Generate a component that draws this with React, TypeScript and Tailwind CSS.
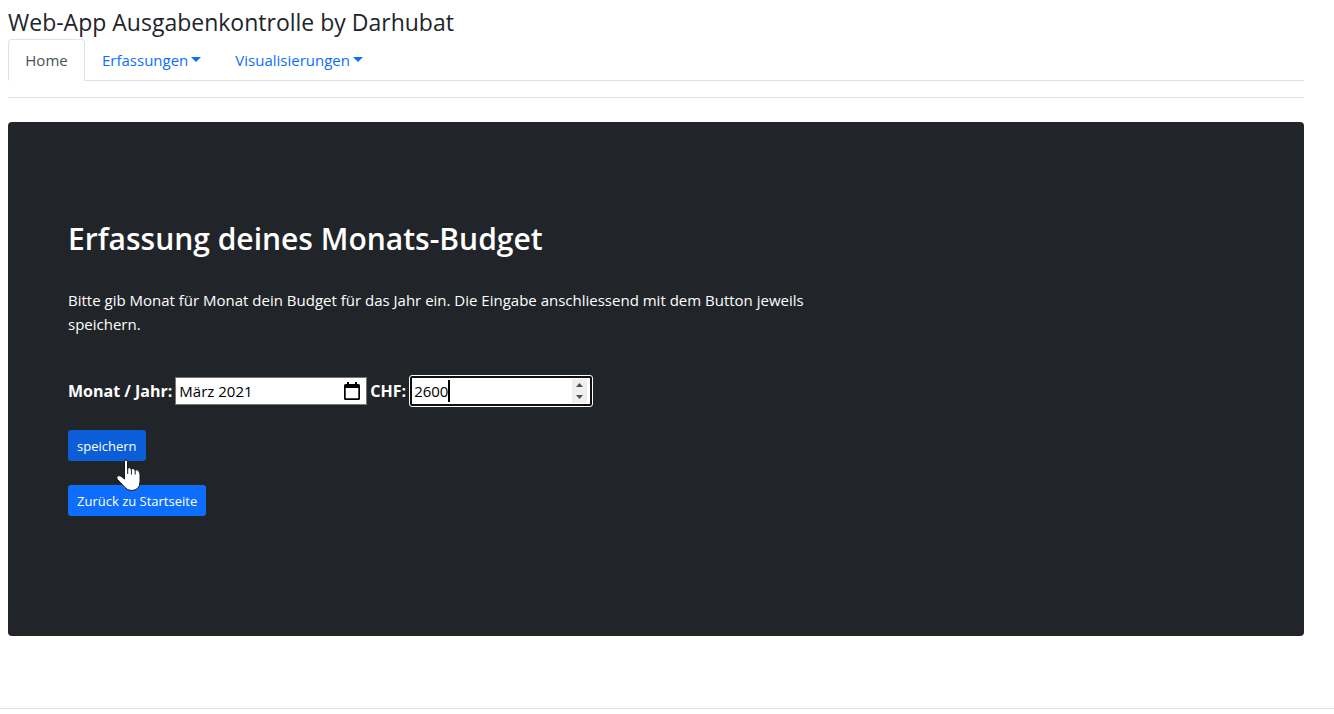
import { useState } from "react";

const tabs = ["Erfassungen", "Visualisierungen"];

function Caret() {
  return (
    <svg className="h-[5px] w-[10px]" viewBox="0 0 10 5" fill="currentColor" aria-hidden="true">
      <path d="M0 0h10L5 5z" />
    </svg>
  );
}

function CalendarIcon() {
  return (
    <svg className="h-[18px] w-[16px]" viewBox="0 0 16 18" aria-hidden="true">
      <path
        fillRule="evenodd"
        fill="#000"
        d="M3 0h2v2h6V0h2v2h1.5A1.5 1.5 0 0 1 16 3.500V16.500A1.500 1.500 0 0 1 14.500 18H1.500A1.500 1.500 0 0 1 0 16.500V3.500A1.500 1.500 0 0 1 1.500 2H3zM1.700 6v10.300h12.600V6z"
      />
    </svg>
  );
}

function HandPointer() {
  return (
    <svg
      className="pointer-events-none absolute top-[29px] left-[48px] z-10 h-[33px] w-[26px]"
      viewBox="0 0 26 33"
      aria-hidden="true"
    >
      <path
        d="M8.500 2.500Q8.500 1 10 1T11.500 2.500V10Q12 8.500 13.500 8.700Q15 9 15.200 10.500Q15.700 9.300 17 9.500Q18.700 9.800 19 11.500Q19.700 10.600 21 10.800Q22.800 11 23.300 13.200L24 15V23Q24 27 21.500 29.500Q19 31.500 15.500 31.500Q11.500 31.500 9 28.500L1.500 20.500Q0 18.500 1.200 17.200Q2.700 16 5 17.200L8.500 20Z"
        fill="#fff"
        stroke="#17171c"
        strokeWidth="1"
        strokeLinejoin="round"
      />
      <path d="M11.700 10v5M15.400 10.500v5M19.200 11.500v4" stroke="#17171c" strokeWidth="1" fill="none" />
    </svg>
  );
}

export default function App() {
  const [month, setMonth] = useState("März 2021");
  const [amount, setAmount] = useState(2600);

  return (
    <div className="min-h-screen bg-white pt-2 font-['Open_Sans','Noto_Sans',sans-serif] text-[15px] leading-6 text-[#212529]">
      <div className="pr-[30px] pl-2">
        <header>
          <h1 className="mb-[2px] text-[23px] leading-[29px]">Web-App Ausgabenkontrolle by Darhubat</h1>
          <nav className="flex border-b border-[#dee2e6]">
            <a
              href="#home"
              className="-mb-px flex h-[42px] w-[77px] items-center justify-center rounded-t border border-[#dee2e6] border-b-white bg-white text-[#495057]"
            >
              Home
            </a>
            {tabs.map((tab) => (
              <a
                key={tab}
                href={"#" + tab.toLowerCase()}
                className="flex h-[41px] items-center gap-[3px] px-[17px] text-[#0d6efd]"
              >
                {tab}
                <Caret />
              </a>
            ))}
          </nav>
        </header>
        <hr className="mt-4 mb-6 border-[#dee2e6]" />
        <main className="rounded bg-[#212529] px-[60px] pt-[96px] pb-[120px] text-white">
          <h2 className="text-[30px] leading-[42px] font-semibold">Erfassung deines Monats-Budget</h2>
          <p className="mt-7 max-w-[764px]">
            Bitte gib Monat für Monat dein Budget für das Jahr ein. Die Eingabe anschliessend mit dem Button jeweils
            speichern.
          </p>
          <form onSubmit={(event) => event.preventDefault()}>
            <div className="mt-[39px] flex items-center gap-[3px]">
              <label htmlFor="month" className="text-base font-bold whitespace-nowrap">
                Monat / Jahr:
              </label>
              <div className="flex h-7 w-[192px] items-center border border-[#767676] bg-white pr-[6px] pl-[3px]">
                <input
                  id="month"
                  value={month}
                  onChange={(event) => setMonth(event.target.value)}
                  className="min-w-0 flex-1 bg-transparent text-black outline-none"
                />
                <CalendarIcon />
              </div>
              <label htmlFor="amount" className="text-base font-bold">
                CHF:
              </label>
              <div className="relative flex h-8 w-[184px] items-center rounded-[3px] border border-white bg-[#101010] p-[2px]">
                <div className="flex h-full w-full items-center bg-white pr-[3px] pl-[2px]">
                  <input
                    id="amount"
                    inputMode="numeric"
                    value={amount}
                    onChange={(event) => setAmount(Number(event.target.value) || 0)}
                    className="min-w-0 flex-1 bg-transparent text-black outline-none"
                  />
                  <div className="flex h-6 w-[15px] flex-col bg-[#efefef] text-[#505050]">
                    <button
                      type="button"
                      aria-label="Betrag erhöhen"
                      onClick={() => setAmount(amount + 1)}
                      className="flex flex-1 items-center justify-center"
                    >
                      <svg className="h-1 w-[7px]" viewBox="0 0 7 4" fill="currentColor">
                        <path d="M0 4h7L3.500 0z" />
                      </svg>
                    </button>
                    <button
                      type="button"
                      aria-label="Betrag verringern"
                      onClick={() => setAmount(amount - 1)}
                      className="flex flex-1 items-center justify-center"
                    >
                      <svg className="h-1 w-[7px]" viewBox="0 0 7 4" fill="currentColor">
                        <path d="M0 0h7L3.500 4z" />
                      </svg>
                    </button>
                  </div>
                </div>
                <span className="pointer-events-none absolute top-1 left-[38px] h-[22px] w-[2px] bg-black" />
              </div>
            </div>
            <div className="relative mt-[23px] w-fit">
              <button
                type="submit"
                className="flex h-[31px] items-center rounded-[3px] bg-[#0b5ed7] px-[9px] text-[13px] leading-5"
              >
                speichern
              </button>
              <HandPointer />
            </div>
          </form>
          <button
            type="button"
            className="mt-6 flex h-[31px] items-center rounded-[3px] bg-[#0d6efd] px-[9px] text-[13px] leading-5"
          >
            Zurück zu Startseite
          </button>
        </main>
      </div>
      <hr className="mt-[72px] border-[#dee2e6]" />
    </div>
  );
}
